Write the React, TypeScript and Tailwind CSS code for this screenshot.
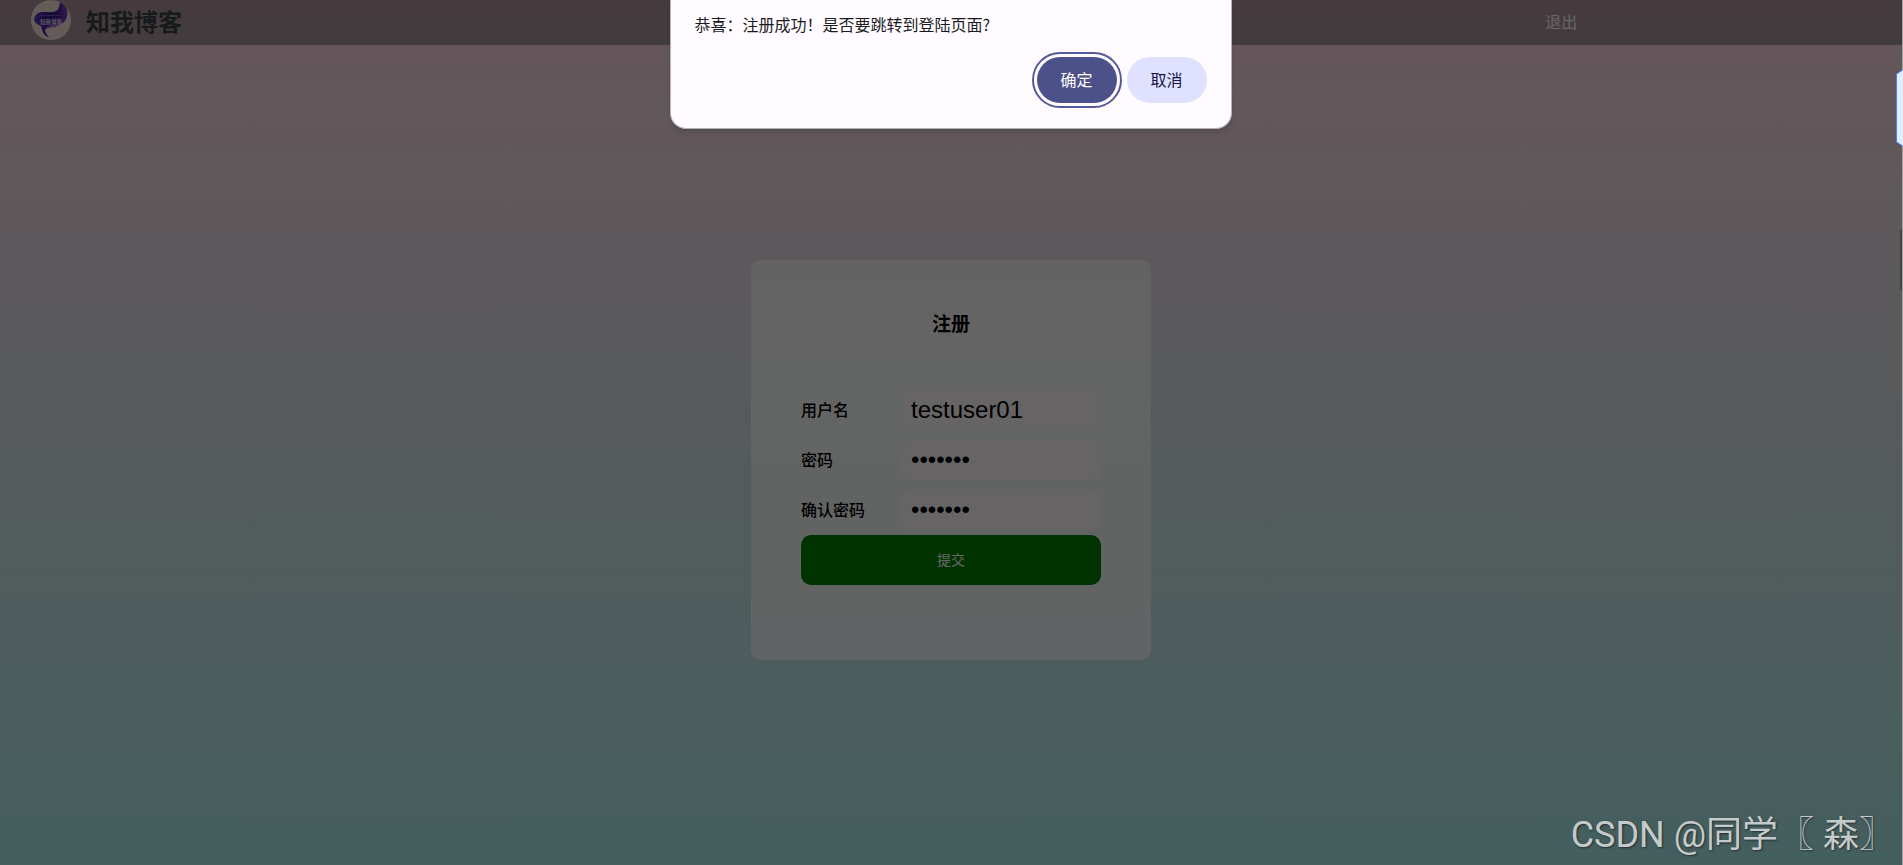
import { useState } from "react";

const fields = [
  { id: "username", label: "用户名", type: "text", value: "testuser01" },
  { id: "password", label: "密码", type: "password", value: "test123" },
  { id: "password2", label: "确认密码", type: "password", value: "test123" },
];

const Logo = () => (
  <svg viewBox="0 0 40 40" className="size-10" aria-hidden="true">
    <defs>
      <linearGradient id="ribbon" x1="0" y1="0" x2="1" y2="0">
        <stop offset="0" stopColor="#5a3cb4" />
        <stop offset="0.5" stopColor="#35188c" />
        <stop offset="0.75" stopColor="#4a2096" />
        <stop offset="1" stopColor="#8a48cc" />
      </linearGradient>
    </defs>
    <circle cx="20" cy="20" r="20" fill="#fae6dc" />
    <path
      d="M3 20C3 15 7 12 12 12C18 12 23 13 26.500 10C28.500 8 28 5 29 2.500C34 4 37 9 36.500 14C36 20 32 23.500 27 25.500C22 27.500 16 27 14 30C14 32 16 35 18 37C13 36 11 31 10.500 27C9 25 4 24 3 20Z"
      fill="url(#ribbon)"
    />
    <path d="M14 30C14 27 18 25 24 24.500C29 24 33 22 35.500 18C35 21 32 23.500 27 25.500C22 27.500 16 27 14 30Z" fill="#a865dc" />
    <text x="9" y="23.500" fontSize="5.500" fontWeight="700" fill="#e4d8f0" fontFamily="Noto Sans CJK SC, sans-serif">
      知我博客
    </text>
    <path d="M9 15.500H30" stroke="#8a78c4" strokeWidth="0.8" strokeDasharray="2 0.6" />
  </svg>
);

const Header = () => (
  <header className="flex h-[45px] items-start justify-between bg-[#333333]/40 pl-[31px]">
    <div className="flex items-start gap-[15px]">
      <Logo />
      <h1 className="text-2xl leading-[42px] font-bold text-[#3a4242]">知我博客</h1>
    </div>
    <a href="#logout" className="mr-[17.4%] text-base leading-[42px] text-white">
      退出
    </a>
  </header>
);

const RegisterForm = () => {
  const [form, setForm] = useState(fields);

  const changeHandler = (id: string, value: string) => {
    setForm(form.map((f) => (f.id === id ? { ...f, value } : f)));
  };

  return (
    <form className="h-[400px] w-[400px] rounded-[10px] bg-white/80 px-[50px]" onSubmit={(e) => e.preventDefault()}>
      <h3 className="pt-12 pb-[52px] text-center text-[19px] leading-[30px] font-bold text-black">注册</h3>
      <div className="flex flex-col gap-2.5">
        {form.map((f) => (
          <div key={f.id} className="flex h-10 items-center">
            <label htmlFor={f.id} className="w-[100px] pb-0.5 text-base font-medium text-black">
              {f.label}
            </label>
            <input
              id={f.id}
              type={f.type}
              value={f.value}
              onChange={(e) => changeHandler(f.id, e.target.value)}
              className="h-10 w-[200px] rounded-[10px] bg-[#fffbfb] px-2.5 font-['Liberation_Sans',sans-serif] text-2xl text-black outline-none"
            />
          </div>
        ))}
      </div>
      <button type="submit" className="mt-[5px] h-[50px] w-full rounded-[10px] bg-[#008000] pb-0.5 text-sm text-white">
        提交
      </button>
    </form>
  );
};

const ConfirmDialog = () => (
  <div
    role="dialog"
    aria-label="注册成功"
    className="w-[562px] rounded-b-2xl border border-t-0 border-[#b4b2bc] bg-[#fffbff] px-6 pt-2.5 pb-[25px] shadow-md"
  >
    <p className="text-base leading-7 text-[#1b1b1f]">恭喜：注册成功！是否要跳转到登陆页面?</p>
    <div className="mt-[19px] flex justify-end gap-2.5">
      <button className="h-[46px] w-20 rounded-full bg-[#4c5189] pb-0.5 text-base text-white outline-2 outline-offset-3 outline-[#555a98]">
        确定
      </button>
      <button className="h-[46px] w-20 rounded-full bg-[#e0e0ff] pb-0.5 text-base text-[#12144b]">取消</button>
    </div>
  </div>
);

// little drawer handle and scroll thumb stuck to the right edge
const EdgeWidgets = () => (
  <>
    <div className="absolute top-0 right-0 h-full w-px bg-[#a3a3a3]" />
    <svg viewBox="0 0 7 78" className="absolute top-[69px] right-0 h-[78px] w-[7px]" aria-hidden="true">
      <path d="M7.500 0.500L0.500 5V73L7.500 77.500" fill="#e4edff" stroke="#4285f4" />
    </svg>
    <div className="absolute top-[229px] right-px h-[61px] w-0.5 rounded-l-sm bg-[#444444]" />
  </>
);

export default function App() {
  return (
    <div className="relative flex min-h-screen flex-col overflow-hidden bg-linear-to-t from-[#a8edea] to-[#fed6e3] font-['Noto_Sans_CJK_SC',sans-serif]">
      <Header />
      <main className="flex flex-1 items-center justify-center pt-2.5 pr-px">
        <RegisterForm />
      </main>

      <div className="absolute inset-0 flex items-start justify-center bg-black/60 pr-0.5">
        <ConfirmDialog />
      </div>
      <EdgeWidgets />
      <p className="absolute right-2 bottom-1.5 font-[Roboto,'Noto_Sans_CJK_SC',sans-serif] text-4xl leading-12 whitespace-pre text-[#c5caca] [text-shadow:1px_1px_2px_rgba(0,0,0,0.5)]">
        CSDN @同学〖 森〗
      </p>
    </div>
  );
}
